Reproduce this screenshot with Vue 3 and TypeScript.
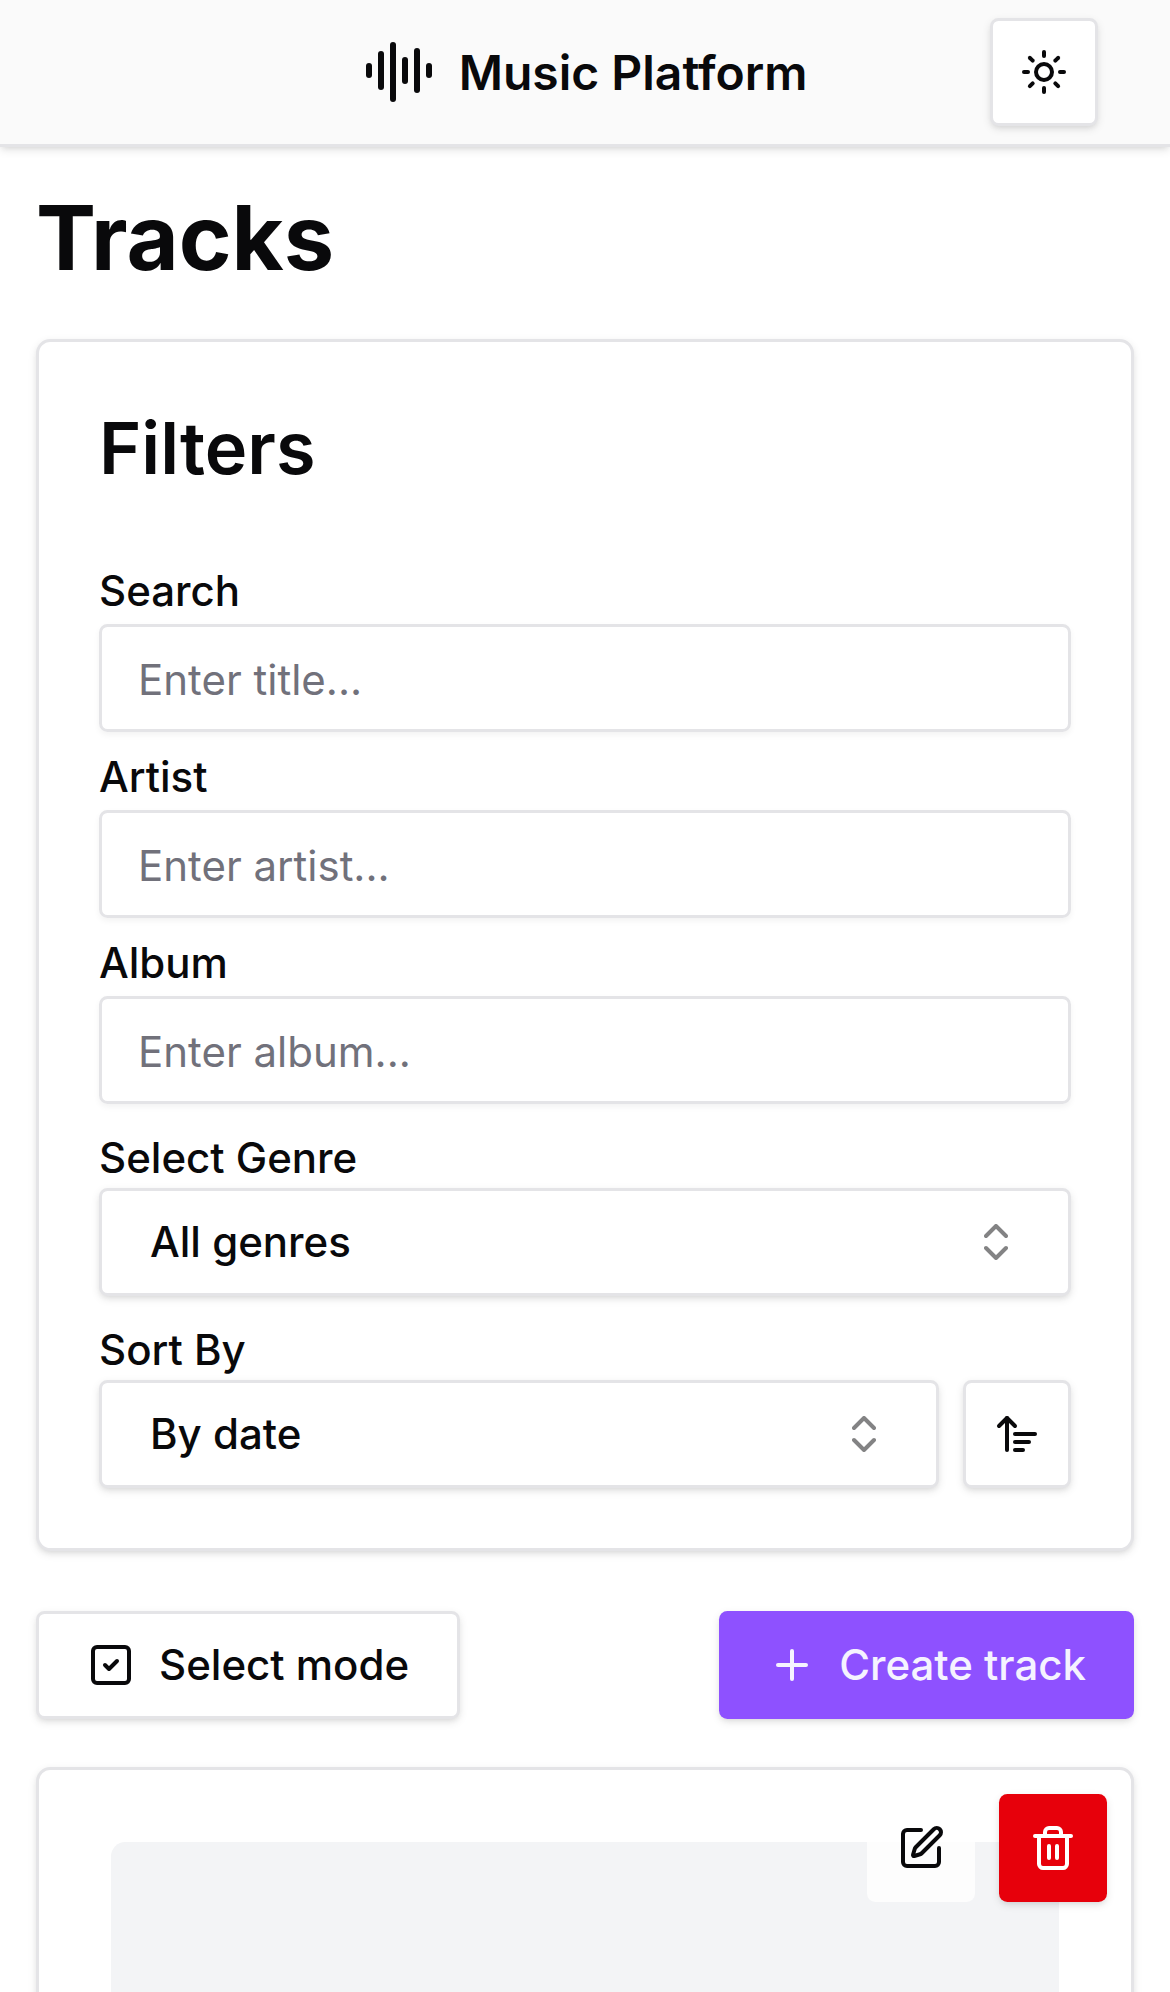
<script setup lang="ts">
interface TextFilter {
  id: string
  label: string
  placeholder: string
}

const textFilters: TextFilter[] = [
  { id: 'search', label: 'Search', placeholder: 'Enter title...' },
  { id: 'artist', label: 'Artist', placeholder: 'Enter artist...' },
  { id: 'album', label: 'Album', placeholder: 'Enter album...' },
]
</script>

<template>
  <div class="page">
    <header class="header">
      <span class="header-side"></span>
      <a class="brand">
        <svg class="icon icon-lg" viewBox="0 0 24 24">
          <path d="M2 10v3" />
          <path d="M6 6v11" />
          <path d="M10 3v18" />
          <path d="M14 8v7" />
          <path d="M18 5v13" />
          <path d="M22 10v3" />
        </svg>
        <span class="brand-name">Music Platform</span>
      </a>
      <span class="header-side header-actions">
        <button class="btn btn-outline btn-icon" aria-label="Toggle theme">
          <svg class="icon" viewBox="0 0 24 24">
            <circle cx="12" cy="12" r="4" />
            <path d="M12 2v2" />
            <path d="M12 20v2" />
            <path d="m4.93 4.93 1.41 1.41" />
            <path d="m17.66 17.66 1.41 1.41" />
            <path d="M2 12h2" />
            <path d="M20 12h2" />
            <path d="m6.34 17.66-1.41 1.41" />
            <path d="m19.07 4.93-1.41 1.41" />
          </svg>
        </button>
      </span>
    </header>

    <main class="main">
      <h1 class="title">Tracks</h1>

      <section class="card filters">
        <h2 class="filters-title">Filters</h2>
        <div class="fields">
          <div v-for="field in textFilters" :key="field.id" class="field">
            <label class="label" :for="field.id">{{ field.label }}</label>
            <input :id="field.id" class="input" type="text" :placeholder="field.placeholder" />
          </div>
          <div>
            <div class="select-label">Select Genre</div>
            <button class="btn btn-outline select">
              <span>All genres</span>
              <svg class="icon chevrons" viewBox="0 0 24 24">
                <path d="m7 15 5 5 5-5" />
                <path d="m7 9 5-5 5 5" />
              </svg>
            </button>
          </div>
          <div>
            <div class="select-label">Sort By</div>
            <div class="sort-row">
              <button class="btn btn-outline select">
                <span>By date</span>
                <svg class="icon chevrons" viewBox="0 0 24 24">
                  <path d="m7 15 5 5 5-5" />
                  <path d="m7 9 5-5 5 5" />
                </svg>
              </button>
              <button class="btn btn-outline btn-icon" aria-label="Sort order">
                <svg class="icon" viewBox="0 0 24 24">
                  <path d="m3 8 4-4 4 4" />
                  <path d="M7 4v16" />
                  <path d="M11 12h10" />
                  <path d="M11 16h7" />
                  <path d="M11 20h4" />
                </svg>
              </button>
            </div>
          </div>
        </div>
      </section>

      <div class="toolbar">
        <button class="btn btn-outline">
          <svg class="icon" viewBox="0 0 24 24">
            <rect width="18" height="18" x="3" y="3" rx="2" />
            <path d="m9 12 2 2 4-4" />
          </svg>
          <span>Select mode</span>
        </button>
        <button class="btn btn-primary">
          <svg class="icon icon-plus" viewBox="0 0 24 24">
            <path d="M5 12h14" />
            <path d="M12 5v14" />
          </svg>
          <span>Create track</span>
        </button>
      </div>

      <article class="card track">
        <div class="cover"></div>
        <div class="track-actions">
          <button class="btn btn-icon btn-edit" aria-label="Edit track">
            <svg class="icon" viewBox="0 0 24 24">
              <path d="M12 3H5a2 2 0 0 0-2 2v14a2 2 0 0 0 2 2h14a2 2 0 0 0 2-2v-7" />
              <path d="M18.375 2.625a1 1 0 0 1 3 3l-9.013 9.014a2 2 0 0 1-.853.505l-2.873.84a.5.5 0 0 1-.62-.62l.84-2.873a2 2 0 0 1 .506-.852z" />
            </svg>
          </button>
          <button class="btn btn-icon btn-danger" aria-label="Delete track">
            <svg class="icon" viewBox="0 0 24 24">
              <path d="M3 6h18" />
              <path d="M19 6v14c0 1-1 2-2 2H7c-1 0-2-1-2-2V6" />
              <path d="M8 6V4c0-1 1-2 2-2h4c1 0 2 1 2 2v2" />
              <path d="M10 11v6" />
              <path d="M14 11v6" />
            </svg>
          </button>
        </div>
      </article>
    </main>
  </div>
</template>

<style>
body {
  margin: 0;
  background: #fff;
}
</style>

<style scoped>
.page,
.page * {
  box-sizing: border-box;
}

.page {
  --border: #e4e4e7;
  --shadow: 0 3px 9px 0 rgb(0 0 0 / 0.1), 0 3px 6px -3px rgb(0 0 0 / 0.1);
  height: 1992px;
  overflow: hidden;
  color: #09090b;
  font-family: Inter, 'Liberation Sans', sans-serif;
  font-optical-sizing: none;
  font-size: 42px;
  line-height: 60px;
}

.header {
  display: flex;
  align-items: center;
  height: 147px;
  padding: 0 72px;
  background: #fafafa;
  border-bottom: 3px solid var(--border);
  box-shadow: var(--shadow);
}

.header-side {
  flex: 1;
}

.header-actions {
  display: flex;
  justify-content: flex-end;
}

.brand {
  display: flex;
  align-items: center;
  gap: 24px;
}

.brand-name {
  padding-top: 2px;
  font-size: 48px;
  font-weight: 600;
  line-height: 70px;
  white-space: nowrap;
}

.icon {
  display: block;
  flex-shrink: 0;
  width: 48px;
  height: 48px;
  fill: none;
  stroke: currentColor;
  stroke-width: 2;
  stroke-linecap: round;
  stroke-linejoin: round;
}

.icon-lg {
  width: 72px;
  height: 72px;
}

.icon-plus {
  margin: 0 -1px 0 1px;
}

.main {
  display: flex;
  flex-direction: column;
  gap: 48px;
  padding: 36px;
}

.title {
  height: 108px;
  margin: 0;
  font-size: 90px;
  font-weight: 700;
  line-height: 110px;
}

.card {
  background: #fff;
  border: 3px solid var(--border);
  border-radius: 14.4px;
  box-shadow: var(--shadow);
}

.filters {
  padding: 60px;
}

.filters-title {
  margin: 0 0 76px;
  font-size: 72px;
  font-weight: 600;
  line-height: 92px;
}

.fields {
  display: flex;
  flex-direction: column;
  gap: 24px;
}

.field {
  display: flex;
  flex-direction: column;
  gap: 12px;
}

.label {
  font-weight: 500;
  line-height: 42px;
}

.select-label {
  font-weight: 500;
}

.input {
  width: 100%;
  height: 108px;
  padding: 5px 36px 3px;
  color: inherit;
  font: inherit;
  background: transparent;
  border: 3px solid var(--border);
  border-radius: 8.4px;
  box-shadow: 0 3px 6px 0 rgb(0 0 0 / 0.05);
}

.input::placeholder {
  color: #71717b;
  opacity: 1;
}

.btn {
  display: flex;
  align-items: center;
  justify-content: center;
  gap: 24px;
  height: 108px;
  margin: 0;
  padding: 0 48px;
  color: inherit;
  font: inherit;
  font-weight: 500;
  white-space: nowrap;
  background: #fff;
  border: 0;
  border-radius: 8.4px;
  box-shadow: var(--shadow);
}

.btn-outline {
  border: 3px solid var(--border);
}

.btn-icon {
  flex-shrink: 0;
  width: 108px;
  padding: 0;
}

.btn-primary {
  color: #f5f3ff;
  background: #8e51ff;
}

.btn-danger {
  color: #fff;
  background: #e7000b;
}

.btn-edit {
  background: rgb(255 255 255 / 0.8);
  box-shadow: none;
}

.select {
  justify-content: space-between;
  width: 100%;
}

.chevrons {
  opacity: 0.5;
}

.sort-row {
  display: flex;
  gap: 24px;
}

.sort-row .select {
  flex: 1;
}

.toolbar {
  display: flex;
  justify-content: space-between;
  margin-top: 12px;
}

.track {
  position: relative;
  padding: 72px;
}

.cover {
  aspect-ratio: 1;
  background: #f3f4f6;
  border-radius: 14.4px;
}

.track-actions {
  position: absolute;
  top: 24px;
  right: 24px;
  display: flex;
  gap: 24px;
}
</style>
